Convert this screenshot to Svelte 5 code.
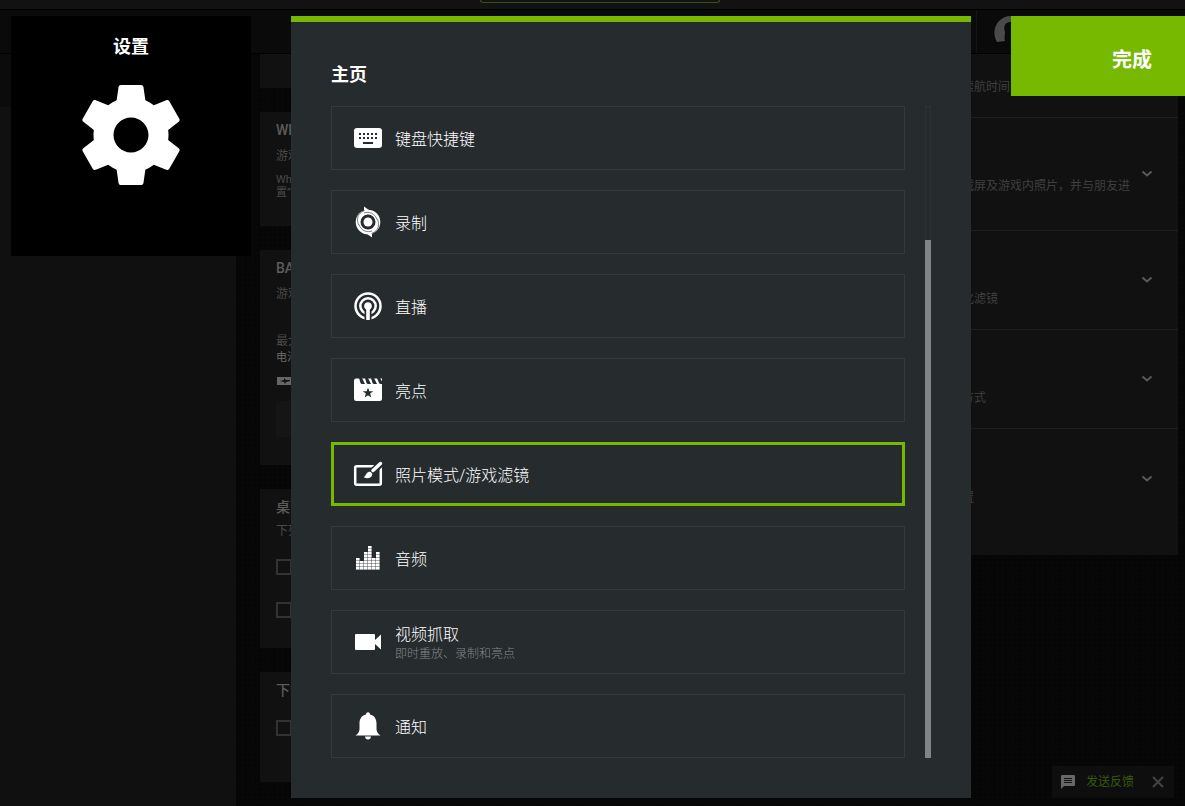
<script>
  let selected = "photo";

  const items = [
    { id: "keyboard", label: "键盘快捷键" },
    { id: "record", label: "录制" },
    { id: "broadcast", label: "直播" },
    { id: "highlights", label: "亮点" },
    { id: "photo", label: "照片模式/游戏滤镜" },
    { id: "audio", label: "音频" },
    { id: "video", label: "视频抓取", note: "即时重放、录制和亮点" },
    { id: "bell", label: "通知" },
  ];

  // number of lit cells in each equalizer column
  const levels = [4, 3, 6, 8, 4, 6];
  const cells = levels.flatMap((count, col) =>
    Array.from({ length: count }, (_, row) => ({ x: 5 + col * 4, y: 26 - row * 3 }))
  );

  const features = [
    { text: "可捕获视频、截屏及游戏内照片，并与朋友进", tall: true },
    { text: "游戏应用个性化滤镜" },
    { text: "优化桌面显示方式" },
    { text: "配置您的新设置" },
  ];
</script>

<div class="stage">
  <div class="app">
    <div class="titlebar"><div class="pill"></div></div>
    <div class="topnav">
      <div class="account">
        <svg width="36" height="36" viewBox="0 0 36 36" aria-hidden="true">
          <path d="M4 27C-3 15 5 1 18 1s21 14 14 26l-6-1c-2-5 0-7 2-9C28 10 24 7 18 7s-8 4-6 10c0 3-1 6 0 9z" fill="#4a4a4a" />
        </svg>
      </div>
    </div>
    <div class="body">
      <aside></aside>
      <div class="cards">
        <section class="card first"></section>
        <section class="card whisper">
          <h3>WHISPER</h3>
          <p>游戏更安静</p>
          <p class="small">Whisper<br />置”选项</p>
        </section>
        <section class="card battery">
          <h3>BATTERY</h3>
          <p>游戏时节电</p>
          <p class="label">最大帧率</p>
          <p class="small bright">电池供电</p>
          <svg width="20" height="8" viewBox="0 0 20 8" aria-hidden="true">
            <path d="M1 0h19v8H1z" fill="#666" />
            <path d="M4 4l4-1V1l2 2h4v1l-4 1-1 2-1-2z" fill="#111" />
          </svg>
          <div class="inset"></div>
        </section>
        <section class="card desktop">
          <h3>桌面</h3>
          <p>下列设置</p>
          <input type="checkbox" aria-label="桌面通知" />
          <input type="checkbox" aria-label="桌面快捷方式" />
        </section>
        <section class="card download">
          <h3>下载</h3>
          <input type="checkbox" aria-label="自动下载" />
        </section>
      </div>
      <div class="features">
        <div class="feature head"><p>延长笔记本的续航时间</p></div>
        {#each features as feature}
          <div class="feature" class:tall={feature.tall}>
            <p>{feature.text}</p>
            <svg width="12" height="8" viewBox="0 0 12 8" aria-hidden="true">
              <path d="M1.500 1.500L6 5.500l4.500-4" fill="none" stroke="#5a5a5a" stroke-width="2" />
            </svg>
          </div>
        {/each}
      </div>
    </div>
    <div class="feedback">
      <svg width="16" height="16" viewBox="0 0 16 16" aria-hidden="true">
        <path d="M2 1h12q1 0 1 1v9q0 1-1 1H4l-3 3V2q0-1 1-1z" fill="#676767" />
        <path d="M4 4.500h8M4 6.500h8M4 8.500h8" stroke="#111" />
      </svg>
      <a href="#feedback">发送反馈</a>
      <button aria-label="关闭">
        <svg width="12" height="12" viewBox="0 0 12 12"><path d="M1 1l10 10M11 1L1 11" stroke="#444" stroke-width="2" /></svg>
      </button>
    </div>
  </div>

  <div class="overlay">
    <div class="tile">
      <h1>设置</h1>
      <svg width="120" height="120" viewBox="0 0 24 24" aria-hidden="true">
        <path
          fill="#fff"
          d="M19.430 12.980c.04-.32.070-.64.070-.98s-.03-.66-.07-.98l2.110-1.650c.19-.15.240-.42.120-.64l-2-3.460c-.12-.22-.39-.3-.61-.22l-2.490 1c-.52-.4-1.080-.73-1.690-.98l-.38-2.650C14.460 2.180 14.250 2 14 2h-4c-.25 0-.46.180-.49.420l-.38 2.650c-.61.250-1.170.590-1.690.980l-2.490-1c-.23-.09-.49 0-.61.220l-2 3.460c-.13.220-.07.490.120.640l2.110 1.650c-.04.320-.07.650-.07.980s.03.660.070.980l-2.110 1.650c-.19.150-.24.420-.12.640l2 3.460c.12.220.390.300.610.220l2.490-1c.52.400 1.080.730 1.690.980l.38 2.650c.03.240.240.420.490.420h4c.25 0 .46-.18.490-.42l.38-2.650c.61-.25 1.170-.59 1.690-.98l2.490 1c.23.090.490 0 .61-.22l2-3.460c.12-.22.070-.49-.12-.64zM12 15.500c-1.930 0-3.500-1.570-3.500-3.500s1.570-3.500 3.500-3.500 3.500 1.570 3.500 3.500-1.570 3.500-3.500 3.500z"
        />
      </svg>
    </div>

    <main class="panel">
      <h2>主页</h2>
      <div class="scroller">
        <ul class="list">
          {#each items as item (item.id)}
            <li>
              <button class="item" class:selected={selected === item.id} on:click={() => (selected = item.id)}>
                <svg width="34" height="34" viewBox="0 0 34 34" aria-hidden="true">
                  {#if item.id === "keyboard"}
                    <rect x="3" y="7" width="28" height="20" rx="3" />
                    <path class="cut" d="M8 12h2v2H8zm4 0h2v2h-2zm4 0h2v2h-2zm4 0h2v2h-2zm4 0h2v2h-2zM8 16h2v2H8zm4 0h2v2h-2zm4 0h2v2h-2zm4 0h2v2h-2zm4 0h2v2h-2zM12 21h10v2H12z" />
                  {:else if item.id === "record"}
                    <circle cx="17" cy="17" r="12.300" />
                    <path d="M13 1.500l7 5-7 2zM21 32.500l-7-5 7-2z" />
                    <path d="M13 8C18 6 24 8.500 26 14.500M21 26C16 28 10 25.500 8 19.500" class="line-cut thin" />
                    <path d="M13.500 5.500C5 9 6 15 7.500 20M20.500 28.500C29 25 28 19 26.500 14" class="line-cut thin" />
                    <circle cx="17" cy="17" r="7.500" class="cut" />
                    <circle cx="17" cy="17" r="4.500" />
                  {:else if item.id === "broadcast"}
                    <circle cx="17" cy="17" r="12.500" class="line" />
                    <circle cx="17" cy="17" r="7.700" class="line" />
                    <path class="cut" d="M13.500 17h7v15h-7z" />
                    <circle cx="17" cy="17" r="3.800" />
                    <path d="M15.200 17h3.600v14h-3.600z" />
                  {:else if item.id === "highlights"}
                    <path d="M5 5.500h26v20q0 2.500-2.500 2.500h-23Q3 28 3 25.500v-18q0-2 2-2z" />
                    <path class="cut" d="M8 5h3l3 6h-3q-1 0-1.500-1zm6 0h3l3 6h-3q-1 0-1.500-1zm6 0h3l3 6h-3q-1 0-1.500-1zm6 0h3l2 3.500V11h-1.500q-1 0-1.500-1zM17 14.500l1.300 3.700h4l-3.200 2.400 1.200 3.900L17 22.200l-3.300 2.300 1.200-3.900-3.200-2.400h4z" />
                  {:else if item.id === "photo"}
                    <rect x="4.200" y="9.200" width="25.600" height="18.600" rx="1.500" class="line" />
                    <path d="M21 15L31 5.500" class="line-cut wide" />
                    <path d="M22 13.500l7.500-7" class="line brush" />
                    <path d="M17.500 15c2-.8 4.500 1.200 3.500 3.500-1.200 3-5.500 3.500-8.500 1.500 2.500-.5 2-4 5-5z" />
                  {:else if item.id === "audio"}
                    {#each cells as cell}
                      <rect x={cell.x} y={cell.y} width="3.600" height="2.600" />
                    {/each}
                  {:else if item.id === "video"}
                    <path d="M5 9h18q1 0 1 1v5l6-5.500v15L24 19v5q0 1-1 1H5q-1 0-1-1V10q0-1 1-1z" />
                  {:else}
                    <path d="M15 5.500c0-3 4-3 4 0 4.500 1 6.500 4.500 6.500 9v5.500c0 2 1 4.500 4 6.500h-25c3-2 4-4.500 4-6.500v-5.500c0-4.500 2-8 6.500-9zM14 27.500h6c0 4-6 4-6 0z" />
                  {/if}
                </svg>
                <span class="text">
                  <span>{item.label}</span>
                  {#if item.note}<small>{item.note}</small>{/if}
                </span>
              </button>
            </li>
          {/each}
        </ul>
        <div class="track"><div class="thumb"></div></div>
      </div>
    </main>

    <button class="done">完成</button>
  </div>
</div>

<style>
  :global(body) {
    margin: 0;
    background: #060606;
  }

  h1,
  h2,
  h3,
  p,
  ul {
    margin: 0;
    padding: 0;
  }

  button {
    border: 0;
    padding: 0;
    background: none;
    color: inherit;
    font: inherit;
    cursor: pointer;
  }

  svg {
    display: block;
    flex: none;
  }

  /* the dimmed app and the overlay share one grid cell */
  .stage {
    display: grid;
    grid-template-columns: minmax(0, 1fr);
    min-height: 100vh;
    overflow: hidden;
    font-family: Roboto, "Noto Sans CJK SC", sans-serif;
    color: #fff;
  }

  .app,
  .overlay {
    grid-area: 1 / 1;
  }

  /* APP BEHIND */
  .app {
    position: relative;
    min-width: 0;
    background: radial-gradient(#080808 1px, #060606 2px) 0 0 / 5px 5px;
    color: #4a4a4a;
    font-size: 12px;
    line-height: 16px;
  }

  .titlebar {
    display: flex;
    justify-content: center;
    height: 9px;
    padding-left: 15px;
    background: #121212;
    border-bottom: 1px solid #000;
  }

  .pill {
    box-sizing: border-box;
    width: 240px;
    height: 3px;
    border: 1px solid #3a5210;
    border-top: 0;
    border-radius: 0 0 3px 3px;
  }

  .topnav {
    display: flex;
    justify-content: flex-end;
    height: 43px;
    background: #0a0a0a;
    border-bottom: 1px solid #000;
  }

  .account {
    width: 192px;
    padding: 5px 0 0 16px;
    border-left: 1px solid #151515;
  }

  .body {
    display: flex;
    align-items: flex-start;
  }

  aside {
    flex: 0 0 236px;
    align-self: stretch;
    margin-right: 24px;
    background: #101010;
    border-top: 53px solid #0b0b0b;
    box-sizing: border-box;
  }

  .cards {
    flex: 1;
    display: flex;
    flex-direction: column;
    gap: 24px;
    padding-bottom: 24px;
  }

  .card {
    box-sizing: border-box;
    padding: 8px 16px;
    background: #111;
  }

  .card h3 {
    margin-bottom: 8px;
    color: #5c5c5c;
    font-size: 14px;
    line-height: 20px;
    font-weight: 500;
  }

  .card .small {
    margin-top: 9px;
    font-size: 11px;
    line-height: 13px;
  }

  .card .label {
    margin-top: 31px;
  }

  .card .bright {
    margin-top: 2px;
    margin-bottom: 13px;
    color: #6c6c6c;
  }

  .first {
    height: 34px;
  }

  .whisper {
    height: 114px;
  }

  .battery {
    height: 215px;
  }

  .desktop {
    height: 159px;
  }

  .download {
    height: 110px;
  }

  .desktop h3 {
    margin-bottom: 6px;
  }

  .inset {
    height: 36px;
    margin-top: 16px;
    background: #151515;
  }

  .card input {
    appearance: none;
    display: block;
    box-sizing: border-box;
    width: 16px;
    height: 16px;
    margin: 20px 0 27px;
    border: 2px solid #333;
  }

  .features {
    flex: 1;
    margin-right: 7px;
    padding-bottom: 27px;
    background: #111;
    color: #3f3f3f;
  }

  .feature {
    display: flex;
    align-items: center;
    justify-content: flex-end;
    box-sizing: border-box;
    height: 99px;
    padding-right: 25px;
    border-bottom: 1px solid #1e1e1e;
    white-space: nowrap;
  }

  .feature:last-child {
    border-bottom: 0;
  }

  .feature p {
    width: 240px;
    margin-right: 11px;
    padding-top: 38px;
  }

  .feature.head {
    height: 64px;
    padding-right: 48px;
  }

  .feature.head p {
    margin-right: 0;
    padding-top: 2px;
  }

  .feature.tall {
    height: 113px;
  }

  .feature.tall p {
    padding-top: 24px;
  }

  .feedback {
    position: absolute;
    right: 11px;
    bottom: 8px;
    display: flex;
    align-items: center;
    gap: 10px;
    box-sizing: border-box;
    height: 32px;
    padding: 0 10px 0 8px;
    background: #0e0e0e;
  }

  .feedback a {
    margin-right: 8px;
    color: #38580a;
    text-decoration: none;
  }

  /* OVERLAY */
  .overlay {
    position: relative;
    display: flex;
    align-items: flex-start;
    gap: 40px;
    padding: 16px 0 8px 11px;
  }

  .tile {
    flex: 0 0 240px;
    display: flex;
    flex-direction: column;
    align-items: center;
    gap: 15px;
    box-sizing: border-box;
    height: 240px;
    padding-top: 18px;
    background: #000;
  }

  h1,
  h2 {
    font-size: 18px;
    line-height: 26px;
    font-weight: 700;
  }

  .panel {
    flex: 0 1 680px;
    box-sizing: border-box;
    min-width: 0;
    padding: 40px;
    background: #262b2e;
    border-top: 6px solid #76b900;
  }

  h2 {
    margin-bottom: 18px;
  }

  .scroller {
    display: flex;
    gap: 20px;
  }

  .list {
    flex: 1;
    display: flex;
    flex-direction: column;
    gap: 20px;
    list-style: none;
  }

  .item {
    display: flex;
    align-items: center;
    gap: 10px;
    box-sizing: border-box;
    width: 100%;
    height: 64px;
    padding: 0 19px;
    border: 1px solid #35393d;
    text-align: left;
  }

  .item.selected {
    border-color: #76b900;
    box-shadow: inset 0 0 0 2px #76b900;
  }

  .item svg {
    fill: #fff;
  }

  .text {
    display: flex;
    flex-direction: column;
    padding-top: 4px;
    font-size: 16px;
    line-height: 20px;
    font-weight: 300;
  }

  .text small {
    color: #85888a;
    font-size: 12px;
    line-height: 18px;
  }

  .item .cut {
    fill: #262b2e;
  }

  .item .line {
    fill: none;
    stroke: #fff;
    stroke-width: 2.5;
  }

  .item .line-cut {
    fill: none;
    stroke: #262b2e;
  }

  .item .thin {
    stroke-width: 0.6;
  }

  .item .wide {
    stroke-width: 7;
  }

  .item .brush {
    stroke-width: 3.5;
    stroke-linecap: round;
  }

  .track {
    display: flex;
    flex-direction: column;
    justify-content: flex-end;
    width: 6px;
    box-shadow: inset 0 0 0 1px #2d3235;
  }

  .thumb {
    height: 518px;
    background: #808486;
  }

  .done {
    flex: 1;
    height: 80px;
    padding: 4px 33px 0 0;
    background: #76b900;
    font-size: 20px;
    font-weight: 700;
    text-align: right;
  }
</style>
